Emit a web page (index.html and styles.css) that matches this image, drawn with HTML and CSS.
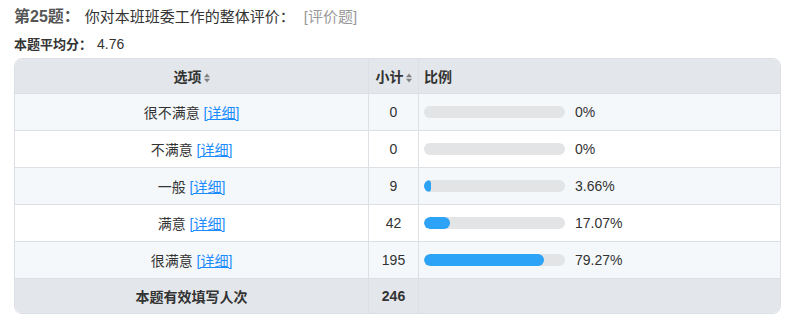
FILE: index.html
```html
<!DOCTYPE html>
<html lang="zh">
<head>
<meta charset="utf-8">
<link rel="stylesheet" href="styles.css">
</head>
<body>
<div class="page">
  <div class="title">
    <span class="qno">第25题：</span>
    <span class="qtext">你对本班班委工作的整体评价：</span>
    <span class="qtype">[评价题]</span>
  </div>
  <div class="avg"><b>本题平均分：</b><span class="avgval">4.76</span></div>
  <table class="result">
    <colgroup><col class="c1"><col class="c2"><col class="c3"></colgroup>
    <thead>
      <tr>
        <th class="center">选项<span class="sort"><svg width="6" height="10" viewBox="0 0 6 10"><path d="M0 4.3L3 0.5L6 4.3Z" fill="#808080"/><path d="M0 5.7L3 9.5L6 5.7Z" fill="#808080"/></svg></span></th>
        <th class="center">小计<span class="sort"><svg width="6" height="10" viewBox="0 0 6 10"><path d="M0 4.3L3 0.5L6 4.3Z" fill="#808080"/><path d="M0 5.7L3 9.5L6 5.7Z" fill="#808080"/></svg></span></th>
        <th class="left">比例</th>
      </tr>
    </thead>
    <tbody>
      <tr class="odd"><td class="center">很不满意 <a href="#">[详细]</a></td><td class="center">0</td><td><div class="ratio"><div class="bar"><div class="fill" style="width:0%"></div></div><span class="pct">0%</span></div></td></tr>
      <tr><td class="center">不满意 <a href="#">[详细]</a></td><td class="center">0</td><td><div class="ratio"><div class="bar"><div class="fill" style="width:0%"></div></div><span class="pct">0%</span></div></td></tr>
      <tr class="odd"><td class="center">一般 <a href="#">[详细]</a></td><td class="center">9</td><td><div class="ratio"><div class="bar"><div class="fill" style="width:5%"></div></div><span class="pct">3.66%</span></div></td></tr>
      <tr><td class="center">满意 <a href="#">[详细]</a></td><td class="center">42</td><td><div class="ratio"><div class="bar"><div class="fill" style="width:18.5%"></div></div><span class="pct">17.07%</span></div></td></tr>
      <tr class="odd"><td class="center">很满意 <a href="#">[详细]</a></td><td class="center">195</td><td><div class="ratio"><div class="bar"><div class="fill" style="width:85%"></div></div><span class="pct">79.27%</span></div></td></tr>
    </tbody>
    <tfoot>
      <tr><td class="center">本题有效填写人次</td><td class="center">246</td><td></td></tr>
    </tfoot>
  </table>
</div>
</body>
</html>
```
FILE: styles.css
```css
html, body {
  margin: 0;
  padding: 0;
  background: #fff;
}
body {
  font-family: "Liberation Sans", "Noto Sans CJK SC", sans-serif;
  color: #333;
}
.page {
  padding: 6px 13px 0 14px;
}
.title {
  height: 22px;
  line-height: 22px;
  display: flex;
  align-items: baseline;
}
.qno {
  font-size: 16px;
  font-weight: bold;
  color: #555;
  margin-right: 5px;
}
.qtext {
  font-size: 15px;
  color: #333;
}
.qtype {
  font-size: 15px;
  color: #999;
  margin-left: 9px;
}
.avg {
  margin-top: 7px;
  font-size: 13px;
  line-height: 18px;
  color: #333;
}
.avg b {
  font-weight: bold;
}
.avgval {
  font-size: 14px;
  margin-left: 5px;
}
.result {
  margin-top: 4px;
  width: 765px;
  border-collapse: separate;
  border-spacing: 0;
  border: 1px solid #dcdfe4;
  border-radius: 8px;
  overflow: hidden;
  table-layout: fixed;
  font-size: 14px;
}
.c1 { width: 354px; }
.c2 { width: 50px; }
.c3 { width: 361px; }
.result th, .result td {
  padding: 0 5px;
  border-right: 1px solid #dcdfe4;
  border-bottom: 1px solid #dcdfe4;
  color: #333;
}
.result th:last-child, .result td:last-child {
  border-right: none;
}
.result tfoot td {
  border-bottom: none;
}
.result thead th {
  height: 34px;
  background: #e3e6ea;
  font-weight: bold;
}
.result tbody td {
  height: 36px;
  background: #fff;
}
.result tbody tr.odd td {
  background: #f5f8fb;
}
.result tfoot td {
  height: 34px;
  background: #e3e6ea;
  font-weight: bold;
}
.center { text-align: center; }
.left { text-align: left; }
.sort {
  display: inline-block;
  margin-left: 2px;
  vertical-align: -1px;
}
.sort svg { display: block; }
a {
  color: #1a8cff;
  text-decoration: underline;
}
.ratio {
  display: flex;
  align-items: center;
}
.bar {
  width: 141px;
  height: 12px;
  border-radius: 6px;
  background: #e3e4e6;
  overflow: hidden;
}
.fill {
  height: 12px;
  border-radius: 6px;
  background: #2ca3f6;
}
.pct {
  margin-left: 10px;
  color: #333;
}
```
